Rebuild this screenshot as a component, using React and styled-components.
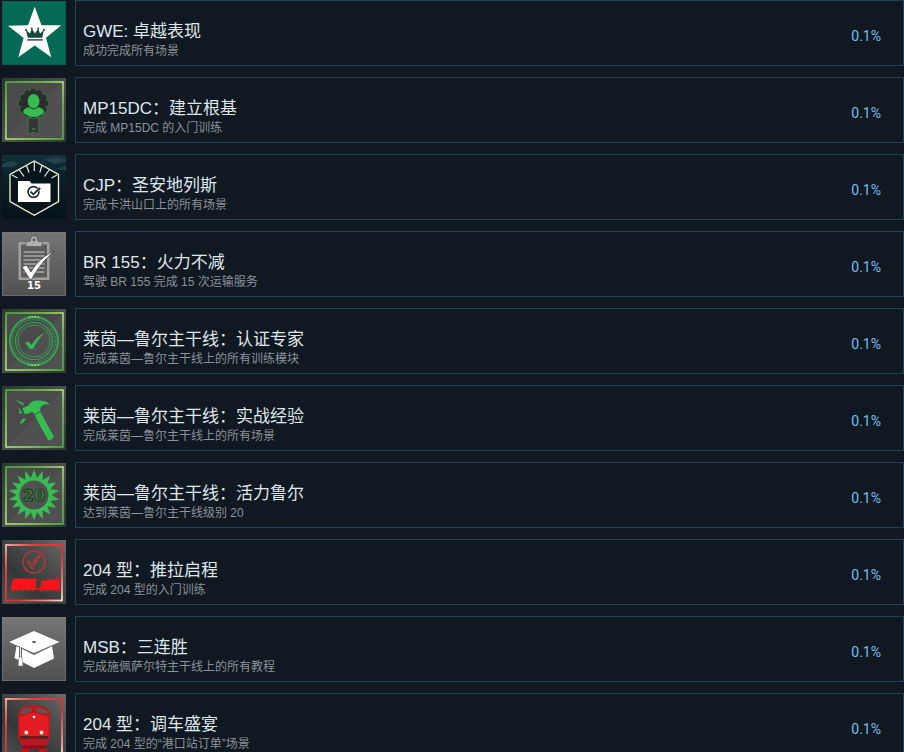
import styled, { createGlobalStyle } from 'styled-components';

const ACHIEVEMENTS = [
  { icon: StarIcon, title: 'GWE: 卓越表现', desc: '成功完成所有场景', percent: '0.1%' },
  { icon: RosetteIcon, title: 'MP15DC：建立根基', desc: '完成 MP15DC 的入门训练', percent: '0.1%' },
  { icon: FolderIcon, title: 'CJP：圣安地列斯', desc: '完成卡洪山口上的所有场景', percent: '0.1%' },
  { icon: ClipboardIcon, title: 'BR 155：火力不减', desc: '驾驶 BR 155 完成 15 次运输服务', percent: '0.1%' },
  { icon: SealIcon, title: '莱茵—鲁尔主干线：认证专家', desc: '完成莱茵—鲁尔主干线上的所有训练模块', percent: '0.1%' },
  { icon: HammerIcon, title: '莱茵—鲁尔主干线：实战经验', desc: '完成莱茵—鲁尔主干线上的所有场景', percent: '0.1%' },
  { icon: LevelIcon, title: '莱茵—鲁尔主干线：活力鲁尔', desc: '达到莱茵—鲁尔主干线级别 20', percent: '0.1%' },
  { icon: CoupledIcon, title: '204 型：推拉启程', desc: '完成 204 型的入门训练', percent: '0.1%' },
  { icon: GraduationIcon, title: 'MSB：三连胜', desc: '完成施佩萨尔特主干线上的所有教程', percent: '0.1%' },
  { icon: LocomotiveIcon, title: '204 型：调车盛宴', desc: '完成 204 型的“港口站订单”场景', percent: '0.1%' },
];

export default function App() {
  return (
    <>
      <GlobalStyle />
      <List>
        {ACHIEVEMENTS.map(({ icon: Icon, title, desc, percent }) => (
          <Row key={title}>
            <Icon />
            <Card>
              <Texts>
                <Title>{title}</Title>
                <Desc>{desc}</Desc>
              </Texts>
              <Percent>{percent}</Percent>
            </Card>
          </Row>
        ))}
      </List>
    </>
  );
}

function StarIcon() {
  return (
    <Badge viewBox="0 0 64 64" aria-hidden="true">
      <rect width="64" height="64" fill="#056a55" />
      <rect x="0.5" y="0.5" width="63" height="63" fill="none" stroke="#0b5c4c" />
      <path d="M32.7 5.7 39.5 24.3H59.3L44 36.7 49.2 56.3 32.7 44.6 16.3 56.3 21.6 36.9 6 24.8 26 24.3Z" fill="#fff" />
      <path d="M24 29l1.8 7.5h14.4L42 29l-4 5-5-6-5 6z" fill="none" />
      <path d="M24 29l4 3.500 1.8-5 3.2 5 3.2-5 1.8 5 4-3.500-1.8 7.800H25.800z" fill="#17463c" />
      <g fill="#17463c">
        <circle cx="24" cy="29" r="1.1" />
        <circle cx="29.8" cy="27.6" r="1" />
        <circle cx="36.2" cy="27.6" r="1" />
        <circle cx="42" cy="29" r="1.1" />
        <rect x="25.2" y="38.2" width="15.6" height="1.4" />
      </g>
    </Badge>
  );
}

function GreenBadge({ id, children }) {
  return (
    <Badge viewBox="0 0 64 64" aria-hidden="true">
      <defs>
        <linearGradient id={`${id}-frame`} x1="0" y1="1" x2="1" y2="0">
          <stop offset="0" stopColor="#b4ee76" />
          <stop offset="0.2" stopColor="#8fe062" />
          <stop offset="0.5" stopColor="#4eb548" />
          <stop offset="0.8" stopColor="#6fcb52" />
          <stop offset="1" stopColor="#b4ee76" />
        </linearGradient>
        <linearGradient id={`${id}-back`} x1="0" y1="0" x2="1" y2="1">
          <stop offset="0" stopColor="#2c3a2a" />
          <stop offset="0.5" stopColor="#4c504a" />
          <stop offset="1" stopColor="#2f3b2f" />
        </linearGradient>
      </defs>
      <rect width="64" height="64" fill={`url(#${id}-back)`} />
      <rect x="4" y="4" width="57" height="57" fill="#4b4a4b" />
      <path d="M4 61 61 4V61Z" fill="#515051" />
      <rect x="4" y="4" width="57" height="57" fill="none" stroke={`url(#${id}-frame)`} strokeWidth="1.5" />
      {children}
    </Badge>
  );
}

function RosetteIcon() {
  const petals = Array.from({ length: 12 }, (_, i) => {
    const a = (i * Math.PI) / 6;
    return { cx: 31.4 + 11.6 * Math.cos(a), cy: 25.5 + 11.6 * Math.sin(a) };
  });

  return (
    <GreenBadge id="rosette">
      <path d="M26.3 40h10.4v16.5l-5.2-2.7-5.2 2.7z" fill="#343534" stroke="#398747" strokeWidth="0.7" />
      {petals.map((p) => (
        <circle key={`${p.cx}-${p.cy}`} {...p} r="3.8" fill="#2c2e2d" stroke="#397d43" strokeWidth="0.7" />
      ))}
      <circle cx="31.4" cy="25.5" r="12.6" fill="#2c2e2d" />
      <path d="M21.2 34c.8-3.6 4-4.2 6.6-5h7.7c2.6.8 5.8 1.4 6.6 5-2.6 3.5-6.1 5-10.4 5s-7.8-1.5-10.5-5z" fill="#35bd52" />
      <ellipse cx="31.6" cy="23.2" rx="6.4" ry="7.6" fill="#35bd52" stroke="#2c2e2d" strokeWidth="1" />
      <path d="M30 52l1.5-2 1.5 2" fill="none" stroke="#46a95a" strokeWidth="0.8" />
    </GreenBadge>
  );
}

function FolderIcon() {
  return (
    <Badge viewBox="0 0 64 64" aria-hidden="true">
      <defs>
        <linearGradient id="night" x1="0" y1="0" x2="0" y2="1">
          <stop offset="0" stopColor="#12313a" />
          <stop offset="0.35" stopColor="#0b2028" />
          <stop offset="1" stopColor="#06121a" />
        </linearGradient>
      </defs>
      <rect width="64" height="64" fill="url(#night)" />
      <path d="M0 9l9-3 8 2-6 4H0zM42 4l12-2 10 2v3l-12 2zM53 14l11-3v4z" fill="#315158" opacity="0.6" />
      <path d="M32.3 6 56.5 19.5V46.5L32.3 60.3 8 46.5V19.5Z" fill="#07141a" stroke="#f4f3d9" strokeWidth="1.3" />
      <path d="M32.3 7v9M40 10.5l-2.2 7M47.5 14.5l-5 7M55 20l-5.5 3M24.5 10.5l2.5 7M17 14.5l5 7M10 20l5.5 3" fill="none" stroke="#e9edea" strokeWidth="1.2" />
      <path d="M16 26h11.5l2 2.5h19V47H16z" fill="#fff" />
      <circle cx="31.5" cy="37" r="5.4" fill="none" stroke="#16262c" strokeWidth="1.6" />
      <path d="M28.5 36.5l2.7 2.8 7-6.3" fill="none" stroke="#fff" strokeWidth="3" />
      <path d="M28.5 36.5l2.7 2.8 7-6.3" fill="none" stroke="#16262c" strokeWidth="1.8" />
    </Badge>
  );
}

function GrayBadge({ id, children }) {
  return (
    <Badge viewBox="0 0 64 64" aria-hidden="true">
      <defs>
        <linearGradient id={id} x1="0" y1="0" x2="0" y2="1">
          <stop offset="0" stopColor="#757575" />
          <stop offset="1" stopColor="#505050" />
        </linearGradient>
      </defs>
      <rect width="64" height="64" fill={`url(#${id})`} />
      <rect x="0.5" y="0.5" width="63" height="63" fill="none" stroke="#7d7d7d" strokeOpacity="0.6" />
      {children}
    </Badge>
  );
}

function ClipboardIcon() {
  return (
    <GrayBadge id="clipboard">
      <rect x="16.5" y="10" width="31" height="38" rx="1" fill="#a0a0a0" />
      <rect x="19" y="12.5" width="26" height="33" fill="#5d5d5d" />
      <path d="M21.5 20h21M21.5 24h21M21.5 28h21M21.5 32h21M21.5 36h21M21.5 40h21" stroke="#a6a6a6" strokeWidth="1.6" />
      <path d="M24 14.5v-5h4c.5-3.5 2-5.5 4-5.5s3.5 2 4 5.5h4v5z" fill="#b0b0b0" stroke="#5d5d5d" strokeWidth="0.7" />
      <circle cx="32" cy="8" r="1.4" fill="#555" />
      <path d="M20 35l4.5-2 4.5 7C34 31 42 23.5 52.5 19 43 27 36 35.5 29.5 47.5H28z" fill="#fff" stroke="#484848" strokeWidth="0.8" />
      <BadgeNumber x="32" y="57" $size={10} $fill="#fff">15</BadgeNumber>
    </GrayBadge>
  );
}

function SealIcon() {
  return (
    <GreenBadge id="seal">
      <g fill="none" stroke="#2fa64f">
        <circle cx="32" cy="32" r="24" strokeWidth="2" />
        <circle cx="32" cy="32" r="21.5" strokeWidth="1.4" strokeDasharray="2 1" opacity="0.65" />
        <circle cx="32" cy="32" r="18.5" strokeWidth="1.2" />
        <circle cx="32" cy="32" r="16" strokeWidth="0.9" />
      </g>
      <path d="M26 8.500a24 24 0 0 1 12 0M26 55.500a24 24 0 0 0 12 0" fill="none" stroke="#70db58" strokeWidth="1.8" strokeDasharray="2 1" />
      <path d="M23 34l3.5-1.5 3 3.5c3-5 6.5-9 12.5-12-4.5 5-8 10-11 16h-3z" fill="#36b955" />
    </GreenBadge>
  );
}

function HammerIcon() {
  return (
    <GreenBadge id="hammer">
      <g fill="#35bd52">
        <path d="M32.5 28l5.5-3 2.5 5 11 20c1 2-3 5-5.5 4L35 34z" />
        <path d="M20.5 22l5.5-2c2-4 5.5-6 10-5.5 5 .2 9 .5 12 4.5-4-1.5-7.5-.5-9.5 3L38 25l-6 3-2-2.5-3 2-4.5.5z" />
        <path d="M12 13.5l9.5 3.5v2.5zM16.5 26l2.5-1.5 1 2.5-1.5 1zM17.5 37.5l3-4.5 3.5-.5-3 4.5zM16.5 22.5l2 1-1 1.5z" />
      </g>
      <path d="M33 28.5l5-2.7" stroke="#3b553d" strokeWidth="0.8" />
    </GreenBadge>
  );
}

function LevelIcon() {
  const spikes = Array.from({ length: 36 }, (_, i) => {
    const r = i % 2 ? 17.5 : 25.5;
    const a = (i * Math.PI) / 18 - Math.PI / 2;
    return `${32 + r * Math.cos(a)},${32 + r * Math.sin(a)}`;
  }).join(' ');

  return (
    <GreenBadge id="level">
      <polygon points={spikes} fill="#38bd52" />
      <circle cx="32" cy="32" r="14.5" fill="#515151" />
      <BadgeNumber x="32" y="38" $size={16} $fill="#477a4b" $stroke="#143d1b">20</BadgeNumber>
    </GreenBadge>
  );
}

function RedBadge({ id, children }) {
  return (
    <Badge viewBox="0 0 64 64" aria-hidden="true">
      <defs>
        <linearGradient id={`${id}-frame`} x1="0" y1="0" x2="1" y2="1">
          <stop offset="0" stopColor="#ffb0a0" />
          <stop offset="0.25" stopColor="#f23a38" />
          <stop offset="0.6" stopColor="#dd2f30" />
          <stop offset="0.9" stopColor="#ff9b90" />
          <stop offset="1" stopColor="#ffddd8" />
        </linearGradient>
        <linearGradient id={`${id}-back`} x1="0" y1="1" x2="1" y2="0">
          <stop offset="0" stopColor="#505652" />
          <stop offset="0.35" stopColor="#343837" />
          <stop offset="0.7" stopColor="#4c4f4e" />
          <stop offset="1" stopColor="#6a6d6b" />
        </linearGradient>
      </defs>
      <rect width="64" height="64" fill={`url(#${id}-back)`} />
      <rect x="4" y="5" width="56" height="55.5" fill="none" stroke={`url(#${id}-frame)`} strokeWidth="1.8" />
      {children}
    </Badge>
  );
}

function CoupledIcon() {
  return (
    <RedBadge id="coupled">
      <circle cx="32" cy="22" r="11" fill="none" stroke="#c23434" strokeWidth="1.2" />
      <path d="M25 22l2-1 3 4c2-4.5 5-8 9-10.5-3.5 4.5-6 9-8.5 14.5z" fill="none" stroke="#c23434" strokeWidth="1.2" />
      <path d="M10.5 39.5h2v-1H34V50H9zM39 41l6-.5v-1h9V37h1.5v2.5h2V50H38zM33 48h7v1.5h-7z" fill="#f7141a" />
      <path d="M36 39v8" stroke="#a32a2b" strokeWidth="1" strokeDasharray="2 1" />
      <path d="M9 51h25M38 51h18" stroke="#b32325" strokeWidth="1.5" strokeDasharray="3 2" />
    </RedBadge>
  );
}

function GraduationIcon() {
  return (
    <GrayBadge id="graduation">
      <path d="M14.5 29L32 38l18-9 2 12.500L32 51 12.500 41z" fill="#fff" />
      <path d="M6 25L32 13.500 58.500 25 32 36.500z" fill="#fff" stroke="#555" strokeWidth="0.8" />
      <ellipse cx="32" cy="25" rx="2" ry="1" fill="#555" />
      <path d="M18.5 30v11" stroke="#555" strokeWidth="3" />
      <path d="M18.5 30v11" stroke="#eee" strokeWidth="1.2" />
      <path d="M17 40h3l1 9h-5z" fill="#fff" stroke="#666" strokeWidth="0.5" />
    </GrayBadge>
  );
}

function LocomotiveIcon() {
  return (
    <RedBadge id="locomotive">
      <path d="M16 21c1-6 3-8 7-9l9-1 9 1c4 1 6 3 7 9v22l-3 8H19l-3-8z" fill="#b7191f" />
      <path d="M18.5 19l2-4 9-1v4l-10 2zM45.5 19l-2-4-9-1v4l10 2z" fill="#5b5556" />
      <path d="M17.5 23L30 19h4l12.500 4v19h-29z" fill="#e31b22" />
      <path d="M18 42h28v3H18zM20 52h25v3H20z" fill="#8d1218" />
      <path d="M20 43h8M37 43h8" stroke="#35292b" strokeWidth="2" />
      <path d="M19 55h8v6h-8zM37 55h8v6h-8z" fill="#b7191f" />
      <circle cx="24.3" cy="38.5" r="1.9" fill="#fff1d5" />
      <circle cx="39.5" cy="38.5" r="1.9" fill="#fff1d5" />
      <circle cx="32" cy="23" r="1.3" fill="#fff" />
    </RedBadge>
  );
}

const BORDER = '#1f4254';
const FONT = `"Liberation Sans", "Noto Sans CJK SC", sans-serif`;

const GlobalStyle = createGlobalStyle`
  * {
    box-sizing: border-box;
  }

  html {
    scrollbar-width: none;
  }

  body {
    margin: 0;
    background: #101821;
    font-family: ${FONT};
  }
`;

const List = styled.ul`
  display: flex;
  flex-direction: column;
  gap: 11px;
  margin: 0;
  padding: 0 0 11px 2px;
  list-style: none;
`;

const Row = styled.li`
  display: flex;
  align-items: center;
  gap: 9px;
`;

const Badge = styled.svg`
  display: block;
  flex: none;
  width: 64px;
  height: 64px;
`;

const BadgeNumber = styled.text`
  font-family: "DejaVu Sans", sans-serif;
  font-size: ${({ $size }) => $size}px;
  font-weight: 700;
  text-anchor: middle;
  fill: ${({ $fill }) => $fill};
  stroke: ${({ $stroke }) => $stroke || 'none'};
`;

const Card = styled.div`
  display: flex;
  align-items: center;
  justify-content: space-between;
  flex: 1;
  min-width: 0;
  min-height: 66px;
  padding: 14px 22px 0 7px;
  border: 1px solid ${BORDER};
`;

const Texts = styled.div`
  min-width: 0;
`;

const Title = styled.h3`
  margin: 0;
  color: #dfe6ec;
  font-size: 17px;
  font-weight: 400;
  line-height: 22px;
`;

const Desc = styled.p`
  margin: 0;
  color: #8b929a;
  font-size: 12px;
  line-height: 16px;
`;

const Percent = styled.span`
  margin-bottom: 8px;
  color: #79bdf3;
  font-family: Roboto, ${FONT};
  font-size: 14px;
  line-height: 16px;
`;
